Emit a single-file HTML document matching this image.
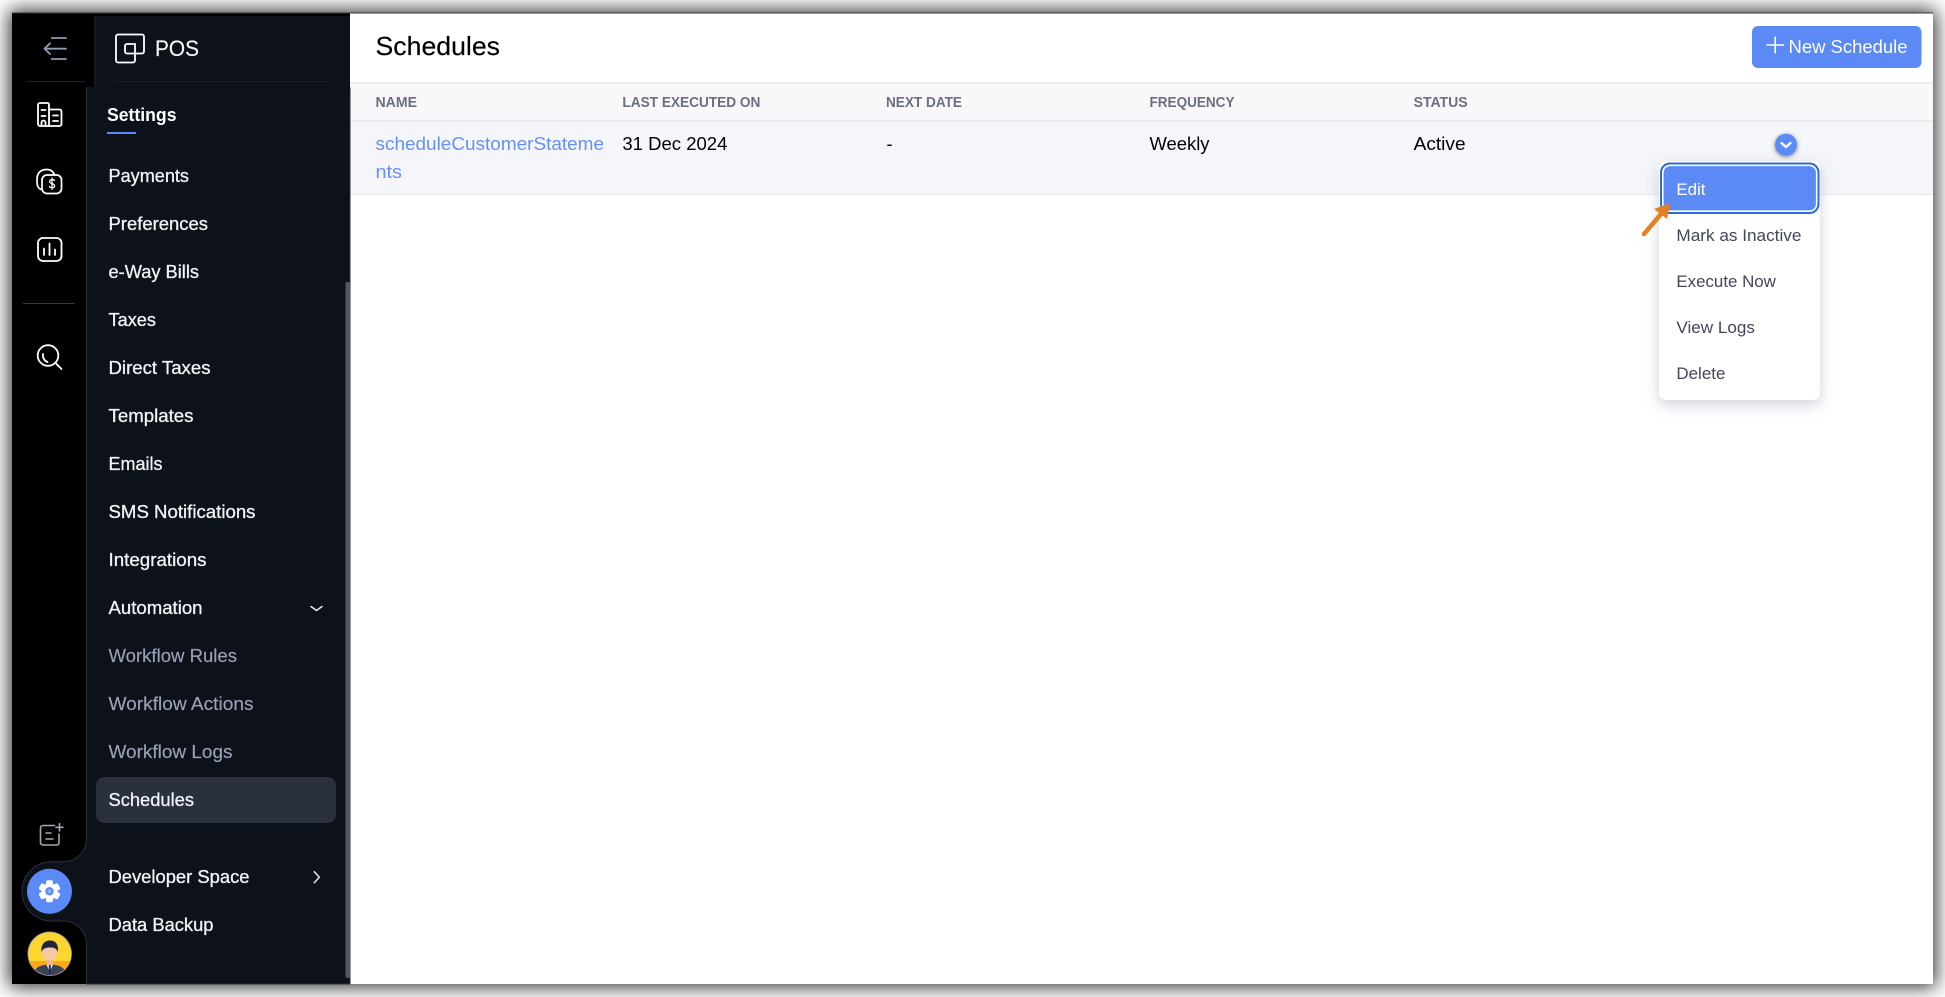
<!DOCTYPE html>
<html lang="en">
<head>
<meta charset="utf-8">
<title>Schedules</title>
<style>
html,body{margin:0;padding:0;width:1945px;height:997px;background:#fff;overflow:hidden}
#win{position:absolute;left:12px;top:13px;width:1921px;height:971px;background:#fff;box-shadow:0 0 18px 3px rgba(0,0,0,.8)}
svg{position:absolute;left:0;top:0}
text{font-family:"Liberation Sans",sans-serif}
.m{stroke-width:.3px}
.l{stroke-width:.15px}
</style>
</head>
<body>
<div id="win"></div>
<svg width="1945" height="997" viewBox="0 0 1945 997" xmlns="http://www.w3.org/2000/svg">
<defs>
<filter id="menu" x="-20%" y="-20%" width="140%" height="140%"><feDropShadow dx="0" dy="5" stdDeviation="7" flood-color="#5a6080" flood-opacity=".28"/></filter>
<filter id="dot" x="-50%" y="-50%" width="200%" height="200%"><feDropShadow dx="0" dy="1" stdDeviation="2" flood-color="#000" flood-opacity=".5"/></filter>
<clipPath id="av"><circle cx="49.7" cy="953.8" r="21.5"/></clipPath>
</defs>

<!-- top hairline -->
<rect x="12" y="12.5" width="1921" height="1" fill="#333"/>

<!-- main table -->
<rect x="350" y="82" width="1583" height="2" fill="#ebecef"/>
<rect x="350" y="84" width="1583" height="36" fill="#f8f8fa"/>
<rect x="350" y="120" width="1583" height="1.5" fill="#e9eaee"/>
<rect x="350" y="121.5" width="1583" height="72.5" fill="#f5f6fa"/>
<rect x="350" y="194" width="1583" height="1" fill="#e9eaee"/>

<text x="375.5" y="55" font-size="26" fill="#000" stroke="#000" class="l" textLength="124.5" lengthAdjust="spacingAndGlyphs">Schedules</text>

<g font-size="14.5" font-weight="700" fill="#6b6f82">
<text x="375.5" y="107" textLength="41.5" lengthAdjust="spacingAndGlyphs">NAME</text>
<text x="622.4" y="107" textLength="138" lengthAdjust="spacingAndGlyphs">LAST EXECUTED ON</text>
<text x="886" y="107" textLength="76" lengthAdjust="spacingAndGlyphs">NEXT DATE</text>
<text x="1149.5" y="107" textLength="85" lengthAdjust="spacingAndGlyphs">FREQUENCY</text>
<text x="1413.6" y="107" textLength="54" lengthAdjust="spacingAndGlyphs">STATUS</text>
</g>
<g font-size="18.5" fill="#000">
<text x="375.5" y="150" fill="#6690f6" textLength="228.5" lengthAdjust="spacingAndGlyphs">scheduleCustomerStateme</text>
<text x="375.5" y="178" fill="#6690f6" textLength="26.5" lengthAdjust="spacingAndGlyphs">nts</text>
<text x="622.4" y="150" textLength="105" lengthAdjust="spacingAndGlyphs">31 Dec 2024</text>
<text x="886.5" y="150" textLength="6" lengthAdjust="spacingAndGlyphs">-</text>
<text x="1149.5" y="150" textLength="60" lengthAdjust="spacingAndGlyphs">Weekly</text>
<text x="1413.6" y="150" textLength="52" lengthAdjust="spacingAndGlyphs">Active</text>
</g>

<!-- new schedule button -->
<rect x="1752" y="26" width="169.5" height="42" rx="6" fill="#5b8af7"/>
<path d="M1766.5 45H1784M1775.2 36.5V53.5" stroke="#fff" stroke-width="1.6" fill="none"/>
<text x="1788.5" y="52.8" font-size="18.5" fill="#fff" textLength="119" lengthAdjust="spacingAndGlyphs">New Schedule</text>

<!-- row action -->
<circle cx="1786" cy="144.7" r="11" fill="#5b8af7" filter="url(#dot)"/>
<path d="M1781.5 143l4.5 4 4.5-4" stroke="#fff" stroke-width="2.4" fill="none" stroke-linecap="round" stroke-linejoin="round"/>

<!-- dropdown -->
<rect x="1659" y="161" width="161" height="239" rx="7" fill="#fff" filter="url(#menu)"/>
<rect x="1661" y="163.5" width="157.5" height="49.5" rx="9" fill="#5b8af7" stroke="#2f6bd3" stroke-width="2"/>
<rect x="1662.8" y="165.3" width="153.9" height="45.9" rx="7.5" fill="none" stroke="#fff" stroke-width="1.6"/>
<text x="1676.4" y="195" font-size="17" fill="#fff" textLength="29" lengthAdjust="spacingAndGlyphs">Edit</text>
<g font-size="17" fill="#43465a">
<text x="1676.4" y="241" textLength="125" lengthAdjust="spacingAndGlyphs">Mark as Inactive</text>
<text x="1676.4" y="287" textLength="99.5" lengthAdjust="spacingAndGlyphs">Execute Now</text>
<text x="1676.4" y="333" textLength="78.5" lengthAdjust="spacingAndGlyphs">View Logs</text>
<text x="1676.4" y="379" textLength="49" lengthAdjust="spacingAndGlyphs">Delete</text>
</g>

<!-- orange arrow -->
<path d="M1644 234L1661 214" stroke="#e67e22" stroke-width="4.5" stroke-linecap="round" fill="none"/>
<path d="M1670 203L1667 219L1654 209Z" fill="#e67e22"/>

<!-- left rail -->
<rect x="12" y="13.5" width="338" height="970.5" fill="#000"/>
<!-- panel with gear bulge -->
<path d="M86.5 88V840A23 23 0 0 1 63.5 861.7H50A29.7 29.7 0 0 0 50 921H63.5A23 23 0 0 1 86.5 943V984H350V88Z" fill="#0d1119" stroke="#2c303a" stroke-width="1"/>
<rect x="95.5" y="16" width="254.5" height="73" fill="#0d1119"/>
<rect x="94.5" y="16" width="1" height="73" fill="#1e222b"/>
<rect x="87" y="87" width="263" height="4" fill="#0d1119"/>
<rect x="26" y="81" width="59" height="1" fill="#1c1f27"/>
<rect x="115" y="81" width="217" height="1" fill="#1b1e27"/>

<!-- back arrow -->
<path d="M51.7 38H66M44.5 48.7H66M51.7 59H66M50 43.3L44.5 48.7L50 54" stroke="#8f9ab8" stroke-width="1.8" fill="none" stroke-linecap="round" stroke-linejoin="round"/>

<!-- POS logo -->
<path d="M135 53.5H142A2 2 0 0 0 144 51.5V36.5A2 2 0 0 0 142 34.5H118A2 2 0 0 0 116 36.5V60.5A2 2 0 0 0 118 62.5H133A2 2 0 0 0 135 60.5V44H127A2 2 0 0 0 125 46V51.5A2 2 0 0 0 127 53.5H135" fill="none" stroke="#fff" stroke-width="1.8"/>
<text x="155" y="56" font-size="22" fill="#f4f5f7" stroke="#f4f5f7" class="l" textLength="44" lengthAdjust="spacingAndGlyphs">POS</text>

<!-- building -->
<g fill="none" stroke="#fff" stroke-width="1.8" stroke-linecap="round" stroke-linejoin="round">
<path d="M40 103H47.5A1.5 1.5 0 0 1 49 104.5V126H40A2 2 0 0 1 38 124V105A2 2 0 0 1 40 103Z"/>
<path d="M49 109.5H59.5A2 2 0 0 1 61.5 111.5V124A2 2 0 0 1 59.5 126H49"/>
<path d="M41.5 110H45.5M41.5 116H45.5M53 115.5H58M53 121H58"/>
<path d="M41.5 126V122.5A2 2 0 0 1 45.5 122.5V126"/>
</g>
<!-- money -->
<g fill="none" stroke="#fff" stroke-width="1.7" stroke-linecap="round" stroke-linejoin="round">
<rect x="42" y="175" width="19.5" height="18.5" rx="5"/>
<path d="M41.5 189.5C37.5 188.5 37 185 37 180C37 173 40.5 169.5 47 169.5C50.5 169.5 53 171 54.5 175"/>
<path d="M54.6 180.5C53.8 179.3 50 179 49.6 181.3C49.3 184 54.8 183.2 54.6 186C54.3 188.3 50.4 188 49.4 186.6M52 178V189.5" stroke-width="1.3"/>
</g>
<!-- chart -->
<g fill="none" stroke="#fff" stroke-width="1.8" stroke-linecap="round">
<rect x="38" y="238" width="23.5" height="23" rx="5"/>
<path d="M44 248.5V255M49.5 243.5V255M55 249.5V255"/>
</g>
<rect x="23" y="303" width="52" height="1" fill="#34373f"/>
<!-- search -->
<g fill="none" stroke="#fff" stroke-width="1.8" stroke-linecap="round">
<circle cx="48" cy="355.5" r="10.3"/>
<path d="M55.5 363L61.5 369"/>
<path d="M43 354C42.5 358 44.5 361 47.5 362"/>
</g>
<!-- note plus -->
<g fill="none" stroke="#a2a6b2" stroke-width="1.6" stroke-linecap="round">
<path d="M54.5 825.5H43A2.5 2.5 0 0 0 40.5 828V842.5A2.5 2.5 0 0 0 43 845H56.5A2.5 2.5 0 0 0 59 842.5V834"/>
<path d="M46 833H51M46 839H53M59.5 823.5V831M56 827.3H63"/>
</g>
<!-- gear -->
<circle cx="49.5" cy="891.3" r="22.5" fill="#5b8af7"/>
<g fill="#fff">
<circle cx="49.5" cy="891.3" r="8"/>
<rect x="46" y="880.3" width="7" height="22" rx="2"/>
<rect x="46" y="880.3" width="7" height="22" rx="2" transform="rotate(60 49.5 891.3)"/>
<rect x="46" y="880.3" width="7" height="22" rx="2" transform="rotate(120 49.5 891.3)"/>
</g>
<circle cx="49.5" cy="891.3" r="4.2" fill="#5b8af7"/>
<circle cx="49.5" cy="891.3" r="2" fill="#8fb0fa"/>
<!-- avatar -->
<circle cx="49.7" cy="953.8" r="22.3" fill="#8d8f96"/>
<g clip-path="url(#av)">
<rect x="27" y="931" width="46" height="46" fill="#fbd62f"/>
<path d="M27 940L49.7 931L73 940V932H27Z" fill="#fde25c"/>
<rect x="27" y="961" width="46" height="16" fill="#faa91c"/>
<path d="M33 977C33 968 40 964.5 49.7 964.5C59.5 964.5 66.5 968 66.5 977Z" fill="#3b4357"/>
<path d="M46.5 964.5H53L49.7 972Z" fill="#fff"/>
<path d="M48.8 965H50.8L51 973L49.8 975L48.6 973Z" fill="#27304a"/>
<rect x="46.6" y="958" width="6.2" height="7" fill="#eeb592"/>
<ellipse cx="49.7" cy="953" rx="7.5" ry="7.5" fill="#f6c9a8"/>
<path d="M41.7 952C40.5 944 45 940.5 50 940.5C55.5 940.5 59 944.5 57.8 952C56.5 948.5 54.5 947.5 50 947.5C45.5 947.5 43 948.5 41.7 952Z" fill="#1d2740"/>
</g>

<!-- sidebar title -->
<text x="107" y="121" font-size="18" font-weight="700" fill="#fff" textLength="69.5" lengthAdjust="spacingAndGlyphs">Settings</text>
<rect x="107" y="132" width="29" height="2" fill="#5b8af7"/>

<!-- active row -->
<rect x="96" y="777" width="240" height="46" rx="8" fill="#2b303f"/>

<!-- sidebar items -->
<g font-size="18.3" fill="#f1f3f7" stroke="#f1f3f7" class="m">
<text x="108.5" y="182" textLength="80.5" lengthAdjust="spacingAndGlyphs">Payments</text>
<text x="108.5" y="230" textLength="99.5" lengthAdjust="spacingAndGlyphs">Preferences</text>
<text x="108.5" y="278" textLength="90.5" lengthAdjust="spacingAndGlyphs">e-Way Bills</text>
<text x="108.5" y="326" textLength="47.5" lengthAdjust="spacingAndGlyphs">Taxes</text>
<text x="108.5" y="374" textLength="102" lengthAdjust="spacingAndGlyphs">Direct Taxes</text>
<text x="108.5" y="422" textLength="85" lengthAdjust="spacingAndGlyphs">Templates</text>
<text x="108.5" y="470" textLength="54" lengthAdjust="spacingAndGlyphs">Emails</text>
<text x="108.5" y="518" textLength="147" lengthAdjust="spacingAndGlyphs">SMS Notifications</text>
<text x="108.5" y="566" textLength="98" lengthAdjust="spacingAndGlyphs">Integrations</text>
<text x="108.5" y="614" textLength="94" lengthAdjust="spacingAndGlyphs">Automation</text>
<text x="108.5" y="806" textLength="85.5" lengthAdjust="spacingAndGlyphs">Schedules</text>
<text x="108.5" y="883" textLength="141" lengthAdjust="spacingAndGlyphs">Developer Space</text>
<text x="108.5" y="931" textLength="105" lengthAdjust="spacingAndGlyphs">Data Backup</text>
</g>
<g font-size="18.3" fill="#99a1b7" stroke="#99a1b7" class="l">
<text x="108.5" y="662" textLength="128.5" lengthAdjust="spacingAndGlyphs">Workflow Rules</text>
<text x="108.5" y="710" textLength="145" lengthAdjust="spacingAndGlyphs">Workflow Actions</text>
<text x="108.5" y="758" textLength="124" lengthAdjust="spacingAndGlyphs">Workflow Logs</text>
</g>
<path d="M311 606.5L316.5 610.5L322 606.5" stroke="#e8eaf0" stroke-width="1.5" fill="none" stroke-linecap="round" stroke-linejoin="round"/>
<path d="M314.3 871.7L319.3 877.3L314.3 882.7" stroke="#e8eaf0" stroke-width="1.5" fill="none" stroke-linecap="round" stroke-linejoin="round"/>

<!-- sidebar scrollbar -->
<rect x="345.5" y="282" width="4.5" height="696" rx="2" fill="#55565c"/>
</svg>
</body>
</html>
